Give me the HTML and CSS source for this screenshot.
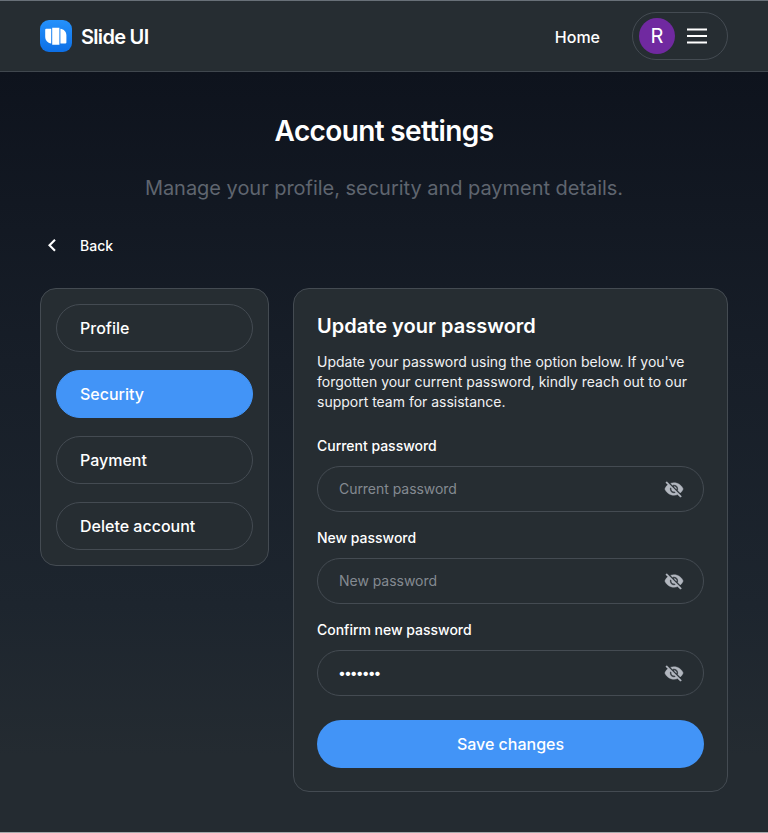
FILE: index.html
```html
<!DOCTYPE html>
<html lang="en">
<head>
<meta charset="utf-8">
<title>Account settings</title>
<link rel="stylesheet" href="styles.css">
</head>
<body>
<svg class="defs" width="0" height="0">
  <symbol id="eye-off" viewBox="0 0 24 24"><path fill="currentColor" stroke="currentColor" stroke-width=".5" d="M11.83 9 15 12.16V12a3 3 0 0 0-3-3h-.17m-4.3.8 1.55 1.55c-.05.21-.08.42-.08.65a3 3 0 0 0 3 3c.22 0 .44-.03.65-.08l1.55 1.55c-.67.33-1.41.53-2.2.53a5 5 0 0 1-5-5c0-.79.2-1.53.53-2.2M2 4.27l2.28 2.28.45.45C3.08 8.3 1.78 10 1 12c1.73 4.39 6 7.5 11 7.5 1.55 0 3.03-.3 4.38-.84l.43.42L19.73 22 21 20.73 3.27 3M12 7a5 5 0 0 1 5 5c0 .64-.13 1.26-.36 1.82l2.93 2.93c1.5-1.25 2.7-2.89 3.43-4.75-1.73-4.39-6-7.5-11-7.5-1.4 0-2.74.25-4 .7l2.17 2.15C10.74 7.13 11.35 7 12 7"/></symbol>
</svg>
<header class="topbar">
  <a class="brand">
    <svg class="logo" width="32" height="32" viewBox="0 0 32 32">
      <defs><linearGradient id="logo-fill" x1="0" y1="0" x2="0" y2="1"><stop offset="0" stop-color="#2491fb"/><stop offset="1" stop-color="#0d6fe6"/></linearGradient></defs>
      <rect width="32" height="32" rx="9" fill="url(#logo-fill)"/>
      <path fill="#fff" d="M11.200 8.700v14.800C7.600 22.900 5.200 20.500 5.200 16.800V9.800q0-1.100 1.100-1.100zM12.200 7.700h7.200v17H12.200zM20.400 8.700c3.600.5 6 3 6 6.600v7.100q0 1.100-1.100 1.100h-4.900z"/>
    </svg>
    <span class="brand-name">Slide UI</span>
  </a>
  <nav class="nav">
    <a class="home">Home</a>
    <div class="user-menu">
      <span class="avatar">R</span>
      <svg width="20" height="16" viewBox="0 0 20 16"><path stroke="#fff" stroke-width="2" d="M0 1.500h20M0 8h20M0 14.500h20"/></svg>
    </div>
  </nav>
</header>
<main class="page">
  <h1 class="title">Account settings</h1>
  <p class="subtitle">Manage your profile, security and payment details.</p>
  <a class="back">
    <svg width="24" height="24" viewBox="0 0 24 24"><path fill="none" stroke="#fff" stroke-width="2.100" d="M15 6.700 9.500 12.200l5.500 5.500"/></svg>
    <span>Back</span>
  </a>
  <div class="columns">
    <nav class="card side">
      <a class="tab">Profile</a>
      <a class="tab active">Security</a>
      <a class="tab">Payment</a>
      <a class="tab">Delete account</a>
    </nav>
    <form class="card panel">
      <h2 class="heading">Update your password</h2>
      <p class="intro">Update your password using the option below. If you've forgotten your current password, kindly reach out to our support team for assistance.</p>
      <label class="label" for="current">Current password</label>
      <div class="field"><input id="current" type="password" placeholder="Current password"><svg class="eye"><use href="#eye-off"/></svg></div>
      <label class="label" for="new">New password</label>
      <div class="field"><input id="new" type="password" placeholder="New password"><svg class="eye"><use href="#eye-off"/></svg></div>
      <label class="label" for="confirm">Confirm new password</label>
      <div class="field"><input id="confirm" class="filled" type="password" value="slideui"><svg class="eye"><use href="#eye-off"/></svg></div>
      <button class="save" type="button">Save changes</button>
    </form>
  </div>
</main>
</body>
</html>
```
FILE: styles.css
```css
* { box-sizing: border-box; }
body {
  margin: 0;
  height: 833px;
  overflow: hidden;
  display: flex;
  flex-direction: column;
  font-family: Inter, "Liberation Sans", sans-serif;
  color: #fff;
  background: #252b31;
}
h1, h2, p { margin: 0; }
.defs { position: absolute; }
.topbar {
  flex: none;
  height: 72px;
  padding: 0 40px;
  display: flex;
  align-items: center;
  justify-content: space-between;
  background: #262d32;
  border-top: 1px solid #687078;
  border-bottom: 1px solid #40474e;
}
.brand, .nav, .user-menu, .back { display: flex; align-items: center; }
.brand { gap: 9px; }
.brand-name { padding-top: 2px; font-size: 20px; font-weight: 600; line-height: 24px; letter-spacing: -0.7px; }
.nav { gap: 32px; }
.home { padding-top: 1px; font-size: 16px; font-weight: 500; line-height: 20px; }
.user-menu {
  width: 96px;
  height: 48px;
  padding-left: 6px;
  gap: 12px;
  border: 1px solid #444b52;
  border-radius: 24px;
}
.avatar {
  width: 36px;
  height: 36px;
  border-radius: 50%;
  background: #7029a0;
  font-size: 20px;
  line-height: 36px;
  text-align: center;
}
.page {
  flex: 1;
  padding: 41px 40px 0;
  display: flex;
  flex-direction: column;
  background: linear-gradient(#0e131d, #171e28 38%, #1d252e 70%, #242b31 90%);
  border-bottom: 1px solid #a4a8ab;
}
.title {
  font-size: 28px;
  line-height: 36px;
  font-weight: 600;
  letter-spacing: -0.64px;
  text-align: center;
}
.subtitle {
  margin-top: 25px;
  font-size: 20px;
  line-height: 28px;
  letter-spacing: -0.03px;
  text-align: center;
  color: #5f656f;
}
.back {
  margin-top: 31px;
  height: 24px;
  gap: 16px;
  font-size: 14px;
  font-weight: 500;
}
.columns {
  margin-top: 31px;
  display: grid;
  grid-template-columns: 229px 435px;
  gap: 24px;
  align-items: start;
}
.card {
  background: #262d32;
  border: 1px solid #444b52;
  border-radius: 16px;
}
.side {
  padding: 15px;
  display: flex;
  flex-direction: column;
  gap: 18px;
}
.tab {
  height: 48px;
  padding-left: 23px;
  border: 1px solid #444b52;
  border-radius: 24px;
  font-size: 16px;
  line-height: 47px;
  font-weight: 500;
}
.active { background: #4294f7; border-color: #4294f7; }
.panel {
  height: 504px;
  padding: 23px;
  display: flex;
  flex-direction: column;
}
.heading {
  font-size: 20px;
  line-height: 28px;
  font-weight: 600;
  letter-spacing: 0.02px;
}
.intro {
  margin: 12px 0 24px;
  font-size: 14px;
  line-height: 20px;
  letter-spacing: -0.01px;
  color: #f1f2f4;
}
.label {
  font-size: 14px;
  line-height: 20px;
  font-weight: 500;
  letter-spacing: -0.02px;
}
.field {
  height: 46px;
  margin: 10px 0 16px;
  padding: 0 19px 0 21px;
  display: flex;
  align-items: center;
  border: 1px solid #444b52;
  border-radius: 23px;
}
.field input {
  flex: 1;
  min-width: 0;
  padding: 0;
  border: 0;
  outline: 0;
  background: none;
  color: #fff;
  font: 14px/20px Inter, sans-serif;
  letter-spacing: -0.04px;
}
.field .filled { letter-spacing: -1.95px; text-indent: -1px; }
.field input::placeholder { color: #848a91; opacity: 1; }
.eye { width: 20px; height: 20px; color: #b2b7bf; }
.save {
  height: 48px;
  margin-top: 8px;
  border: 0;
  border-radius: 24px;
  background: #4294f7;
  color: #fff;
  font: 500 16px/24px Inter, sans-serif;
}
```
